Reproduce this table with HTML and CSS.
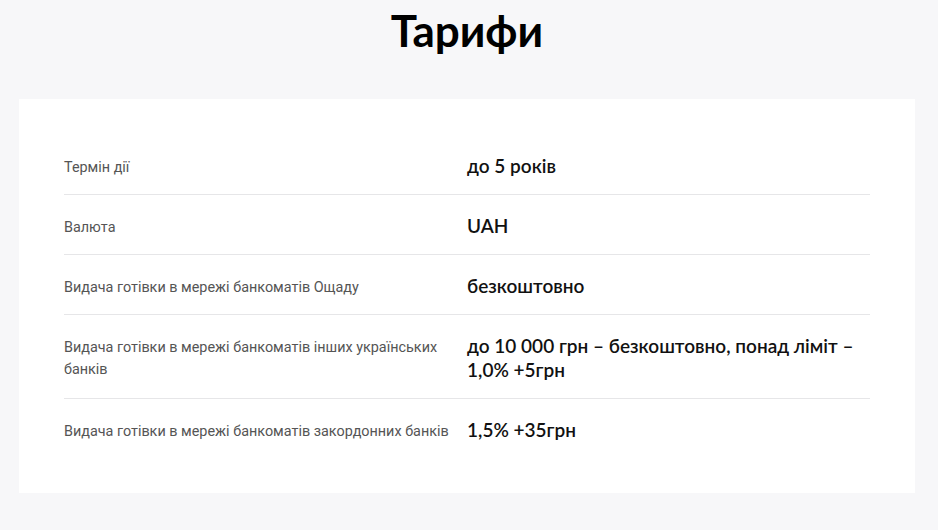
FILE: index.html
```html
<!DOCTYPE html>
<html lang="uk">
<head>
<meta charset="utf-8">
<link rel="stylesheet" href="styles.css">
</head>
<body>
<h1 class="title">Тарифи</h1>
<section class="card">
  <div class="row">
    <div class="label">Термін дії</div>
    <div class="value">до 5 років</div>
  </div>
  <div class="row">
    <div class="label">Валюта</div>
    <div class="value">UAH</div>
  </div>
  <div class="row">
    <div class="label">Видача готівки в мережі банкоматів Ощаду</div>
    <div class="value">безкоштовно</div>
  </div>
  <div class="row">
    <div class="label">Видача готівки в мережі банкоматів інших українських банків</div>
    <div class="value">до 10 000 грн – безкоштовно, понад ліміт – 1,0% +5грн</div>
  </div>
  <div class="row">
    <div class="label">Видача готівки в мережі банкоматів закордонних банків</div>
    <div class="value">1,5% +35грн</div>
  </div>
</section>
</body>
</html>
```
FILE: styles.css
```css
html, body {
  margin: 0;
  padding: 0;
  background: #f7f7f9;
}
body {
  width: 938px;
  height: 530px;
  overflow: hidden;
}
.title {
  margin: 0;
  height: 99px;
  padding-top: 4px;
  padding-right: 4px;
  box-sizing: border-box;
  text-align: center;
  font-family: "Lato", sans-serif;
  font-weight: 700;
  font-size: 44px;
  line-height: 52px;
  color: #000;
}
.card {
  margin-left: 19px;
  width: 896px;
  box-sizing: border-box;
  background: #fff;
  padding: 36px 45px 35px;
}
.row {
  display: grid;
  grid-template-columns: 1fr 1fr;
  padding: 19px 0 16px;
  border-bottom: 1px solid #e6e6e8;
  align-items: start;
}
.row:last-child {
  border-bottom: none;
}
.label {
  font-family: "Roboto", sans-serif;
  font-size: 14.4px;
  line-height: 22px;
  color: #555;
  padding-top: 3px;
  margin-bottom: -1px;
  padding-right: 12px;
}
.value {
  font-family: "Lato", sans-serif;
  font-weight: 600;
  font-size: 19px;
  line-height: 24px;
  color: #111;
}
```
